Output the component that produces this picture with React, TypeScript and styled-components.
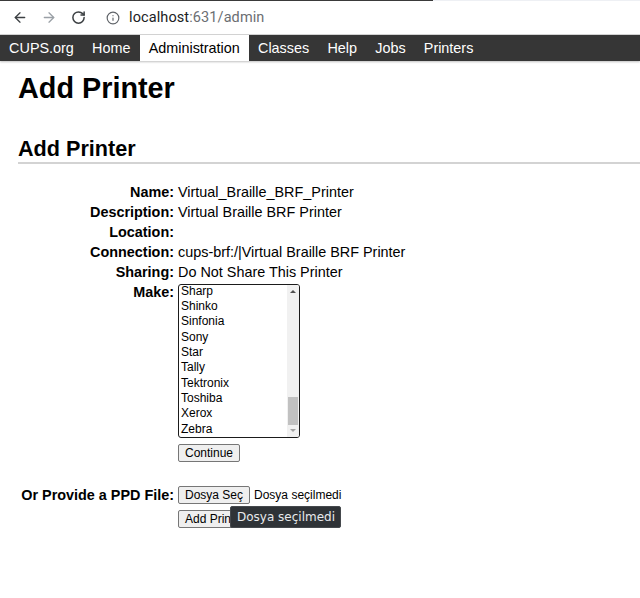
import React from "react";
import styled, { createGlobalStyle } from "styled-components";
import { ArrowLeft, ArrowRight, RotateCw, Info } from "lucide-react";

const GlobalStyle = createGlobalStyle`
  html, body { margin: 0; padding: 0; background: #fff; }
  body { font-family: "Liberation Sans", Arial, sans-serif; color: #000; }
  * { box-sizing: border-box; }
`;

const Chrome = styled.div`
  height: 35px;
  display: flex;
  flex-direction: column;
  background: #fff;
  border-bottom: 1px solid #d6d6d6;
`;

const TabEdge = styled.div`
  height: 1px;
  display: flex;
`;

const TabEdgePart = styled.div<{ $w?: number; $c: string }>`
  background: ${(p) => p.$c};
  ${(p) => (p.$w ? `width: ${p.$w}px;` : "flex: 1;")}
`;

const Toolbar = styled.div`
  flex: 1;
  display: flex;
  align-items: center;
  padding-left: 12px;
  gap: 13px;
`;

const IconBtn = styled.span<{ $c: string }>`
  width: 16px;
  height: 16px;
  display: flex;
  align-items: center;
  justify-content: center;
  color: ${(p) => p.$c};
`;

const Omnibox = styled.div`
  margin-left: 6px;
  display: flex;
  align-items: center;
  gap: 8px;
  height: 28px;
  font-family: Roboto, "Noto Sans", sans-serif;
  font-size: 14.5px;
  letter-spacing: 0.1px;
`;

const Host = styled.span`
  color: #202124;
`;
const Path = styled.span`
  color: #6b6e72;
`;

const Nav = styled.nav`
  height: 26px;
  background: #363636;
  display: flex;
  align-items: stretch;
  box-shadow: 0 1px 2px rgba(0, 0, 0, 0.25);
`;

const NavLink = styled.a<{ $active?: boolean }>`
  padding: 0 9.1px;
  display: flex;
  align-items: center;
  font-size: 14.4px;
  color: ${(p) => (p.$active ? "#000" : "#fff")};
  background: ${(p) => (p.$active ? "#fff" : "transparent")};
  text-decoration: none;
`;

const Content = styled.main`
  padding-left: 18px;
`;

const H1 = styled.h1`
  margin: 11px 0 0;
  font-size: 28.8px;
  line-height: 33px;
  font-weight: bold;
`;

const H2 = styled.h2`
  margin: 31px 0 0;
  font-size: 21.6px;
  line-height: 25px;
  padding-bottom: 1px;
  font-weight: bold;
  border-bottom: 2px solid #d3d3d3;
`;

const FormGrid = styled.div`
  margin-top: 18px;
  display: grid;
  grid-template-columns: 156px 1fr;
  column-gap: 4px;
  font-size: 14.4px;
`;

const Label = styled.div<{ $lh?: number }>`
  font-weight: bold;
  text-align: right;
  line-height: ${(p) => p.$lh ?? 20}px;
  white-space: nowrap;
`;

const Value = styled.div`
  line-height: 20px;
  white-space: nowrap;
`;

const Cell = styled.div<{ $mb?: number }>`
  display: flex;
  flex-direction: column;
  align-items: flex-start;
  margin-bottom: ${(p) => p.$mb ?? 0}px;
`;

const ListBox = styled.div`
  margin-top: 2px;
  width: 122px;
  height: 154px;
  border: 1px solid #1b1b1b;
  border-radius: 3px;
  display: flex;
  overflow: hidden;
  background: #fff;
`;

const Options = styled.div`
  flex: 1;
  display: flex;
  flex-direction: column;
  justify-content: flex-end;
  overflow: hidden;
`;

const Option = styled.div`
  flex: none;
  height: 15.33px;
  line-height: 15.33px;
  padding-left: 2px;
  font-size: 12px;
  color: #000;
`;

const ScrollTrack = styled.div`
  width: 12px;
  position: relative;
  background: #f1f1f1;
`;

const Arrow = styled.div<{ $down?: boolean; $c: string }>`
  position: absolute;
  left: 3px;
  ${(p) => (p.$down ? "bottom: 5px;" : "top: 5px;")}
  width: 0;
  height: 0;
  border-left: 3px solid transparent;
  border-right: 3px solid transparent;
  ${(p) => (p.$down ? `border-top: 3px solid ${p.$c};` : `border-bottom: 3px solid ${p.$c};`)}
`;

const Thumb = styled.div`
  position: absolute;
  left: 1px;
  right: 1px;
  top: 112px;
  height: 28px;
  background: #c1c1c1;
`;

const Button = styled.button<{ $mt?: number }>`
  margin: ${(p) => p.$mt ?? 0}px 0 0;
  font-family: "Liberation Sans", Arial, sans-serif;
  font-size: 12px;
  line-height: 14px;
  padding: 1px 6px;
  border: 1px solid #767676;
  border-radius: 2px;
  background: #efefef;
  color: #000;
`;

const FileRow = styled.div`
  display: flex;
  align-items: center;
  gap: 4px;
  font-size: 12px;
  line-height: 18px;
`;

const SubmitWrap = styled.div`
  position: relative;
  margin-top: 6px;
`;

const Tooltip = styled.div`
  position: absolute;
  left: 52px;
  top: -4px;
  height: 22px;
  padding: 0 5px 0 6px;
  line-height: 20px;
  font-family: "DejaVu Sans", sans-serif;
  font-size: 12px;
  color: #e8eaed;
  background: #2f3337;
  border: 1px solid #45494d;
  border-radius: 2px;
  white-space: nowrap;
`;

const makes = [
  "Sharp",
  "Shinko",
  "Sinfonia",
  "Sony",
  "Star",
  "Tally",
  "Tektronix",
  "Toshiba",
  "Xerox",
  "Zebra",
];

const navItems = [
  "CUPS.org",
  "Home",
  "Administration",
  "Classes",
  "Help",
  "Jobs",
  "Printers",
];

export default function App() {
  return (
    <>
      <GlobalStyle />
      <Chrome>
        <TabEdge>
          <TabEdgePart $w={433} $c="#3a3a3a" />
          <TabEdgePart $c="#eef0f4" />
        </TabEdge>
        <Toolbar>
          <IconBtn $c="#3c4043">
            <ArrowLeft size={17} strokeWidth={2} />
          </IconBtn>
          <IconBtn $c="#9aa0a6">
            <ArrowRight size={17} strokeWidth={2} />
          </IconBtn>
          <IconBtn $c="#3c4043">
            <RotateCw size={15} strokeWidth={2.4} />
          </IconBtn>
          <Omnibox>
            <IconBtn $c="#5f6368">
              <Info size={14} strokeWidth={2} />
            </IconBtn>
            <span>
              <Host>localhost</Host>
              <Path>:631/admin</Path>
            </span>
          </Omnibox>
        </Toolbar>
      </Chrome>
      <Nav>
        {navItems.map((n) => (
          <NavLink key={n} $active={n === "Administration"}>
            {n}
          </NavLink>
        ))}
      </Nav>
      <Content>
        <H1>Add Printer</H1>
        <H2>Add Printer</H2>
        <FormGrid>
          <Label>Name:</Label>
          <Value>Virtual_Braille_BRF_Printer</Value>
          <Label>Description:</Label>
          <Value>Virtual Braille BRF Printer</Value>
          <Label>Location:</Label>
          <Value></Value>
          <Label>Connection:</Label>
          <Value>cups-brf:/|Virtual Braille BRF Printer</Value>
          <Label>Sharing:</Label>
          <Value>Do Not Share This Printer</Value>
          <Label>Make:</Label>
          <Cell $mb={24}>
            <ListBox>
              <Options>
                {makes.map((m) => (
                  <Option key={m}>{m}</Option>
                ))}
              </Options>
              <ScrollTrack>
                <Arrow $c="#505050" />
                <Thumb />
                <Arrow $down $c="#a3a3a3" />
              </ScrollTrack>
            </ListBox>
            <Button $mt={6}>Continue</Button>
          </Cell>
          <Label $lh={18}>Or Provide a PPD File:</Label>
          <Cell>
            <FileRow>
              <Button>Dosya Seç</Button>
              <span>Dosya seçilmedi</span>
            </FileRow>
            <SubmitWrap>
              <Button>Add Printer</Button>
              <Tooltip>Dosya seçilmedi</Tooltip>
            </SubmitWrap>
          </Cell>
        </FormGrid>
      </Content>
    </>
  );
}
